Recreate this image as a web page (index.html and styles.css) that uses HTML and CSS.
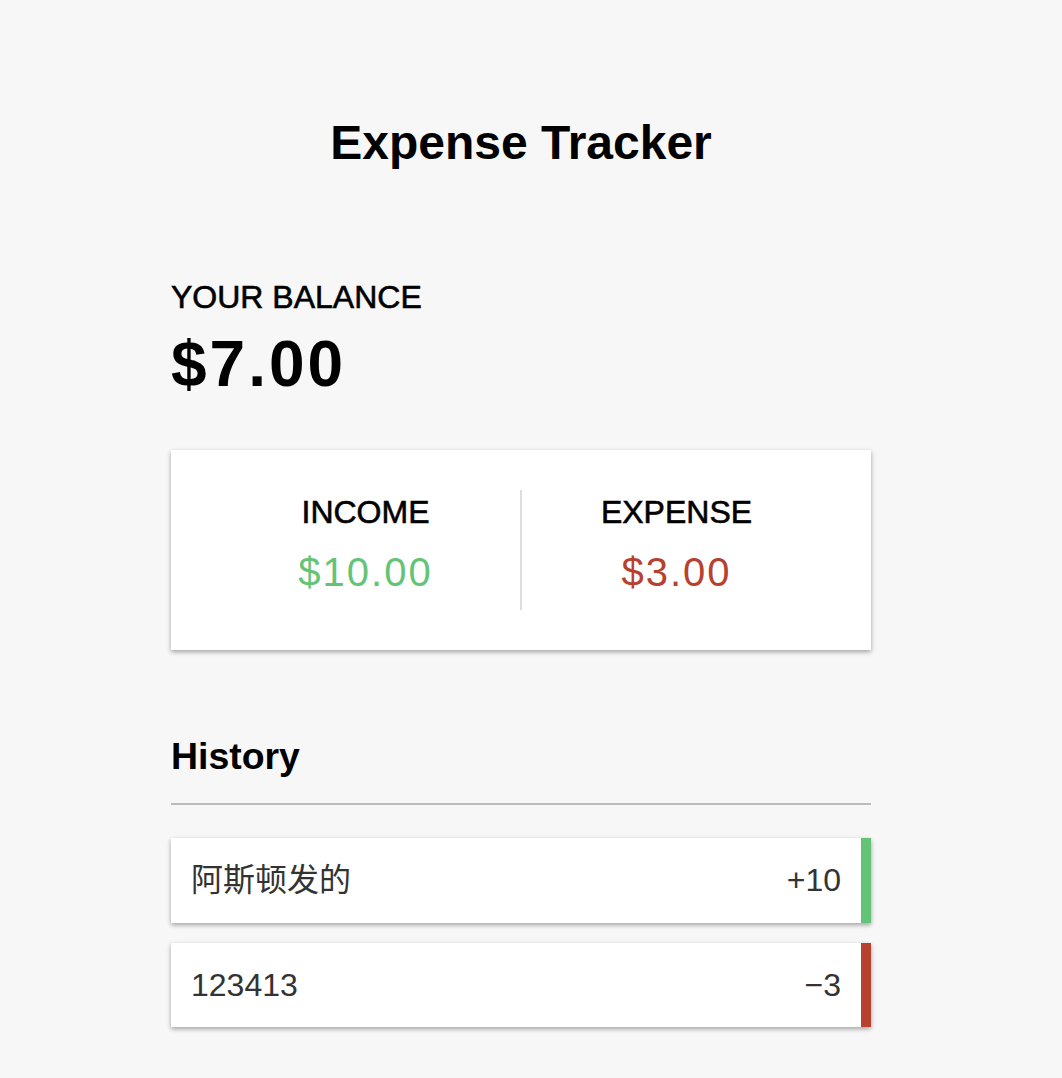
FILE: index.html
```html
<!DOCTYPE html>
<html lang="en">
<head>
<meta charset="UTF-8">
<meta name="viewport" content="width=device-width, initial-scale=1.0">
<title>Expense Tracker</title>
<link rel="stylesheet" href="styles.css">
</head>
<body>
<h2 class="title">Expense Tracker</h2>

<div class="container">
  <h4>Your Balance</h4>
  <h1 id="balance">$7.00</h1>

  <div class="inc-exp-container">
    <div>
      <h4>Income</h4>
      <p class="money plus">$10.00</p>
    </div>
    <div>
      <h4>Expense</h4>
      <p class="money minus">$3.00</p>
    </div>
  </div>

  <h3>History</h3>
  <ul class="list">
    <li class="plus">阿斯顿发的 <span>+10</span></li>
    <li class="minus">123413 <span>&minus;3</span></li>
  </ul>
</div>
</body>
</html>
```

FILE: styles.css
```css
* {
  box-sizing: border-box;
}
body {
  margin: 0;
  padding: 68px 20px 0 0;
  background-color: #f7f7f7;
  font-family: "Liberation Sans", Arial, "Noto Sans CJK SC", sans-serif;
  font-size: 32px;
  line-height: 1.4;
  color: #000;
  display: flex;
  flex-direction: column;
  align-items: center;
}
.title {
  font-size: 48px;
  margin: 41px 0 39px;
}
.container {
  width: 700px;
  margin: 60px auto;
}
h1 {
  font-size: 64px;
  letter-spacing: 3px;
  margin: 0;
}
h4 {
  font-size: 32px;
  font-weight: normal;
  -webkit-text-stroke: 0.6px #000;
  text-transform: uppercase;
  margin: 0;
}
h3 {
  font-size: 37.44px;
  font-weight: bold;
  border-bottom: 2px solid #bbb;
  padding-bottom: 20px;
  margin: 80px 0 20px;
}
.inc-exp-container {
  background-color: #fff;
  box-shadow: 0 2px 6px rgba(0,0,0,0.12), 0 2px 4px rgba(0,0,0,0.24);
  padding: 40px;
  display: flex;
  justify-content: space-between;
  margin: 40px 0;
}
.inc-exp-container > div {
  flex: 1;
  text-align: center;
}
.inc-exp-container > div:first-of-type {
  border-right: 2px solid #dedede;
}
.money {
  font-size: 40px;
  letter-spacing: 2px;
  margin: 10px 0;
}
.money.plus {
  color: #63c477;
}
.money.minus {
  color: #b7412f;
}
.list {
  list-style-type: none;
  padding: 0;
  margin: 33px 0 80px;
}
.list li {
  background-color: #fff;
  box-shadow: 0 2px 6px rgba(0,0,0,0.12), 0 2px 4px rgba(0,0,0,0.24);
  color: #333;
  display: flex;
  justify-content: space-between;
  padding: 20px;
  margin: 20px 0;
  font-family: "Liberation Sans", "Noto Sans CJK SC", sans-serif;
}
.list li.plus {
  border-right: 10px solid #63c477;
}
.list li.minus {
  border-right: 10px solid #b7412f;
}
```
